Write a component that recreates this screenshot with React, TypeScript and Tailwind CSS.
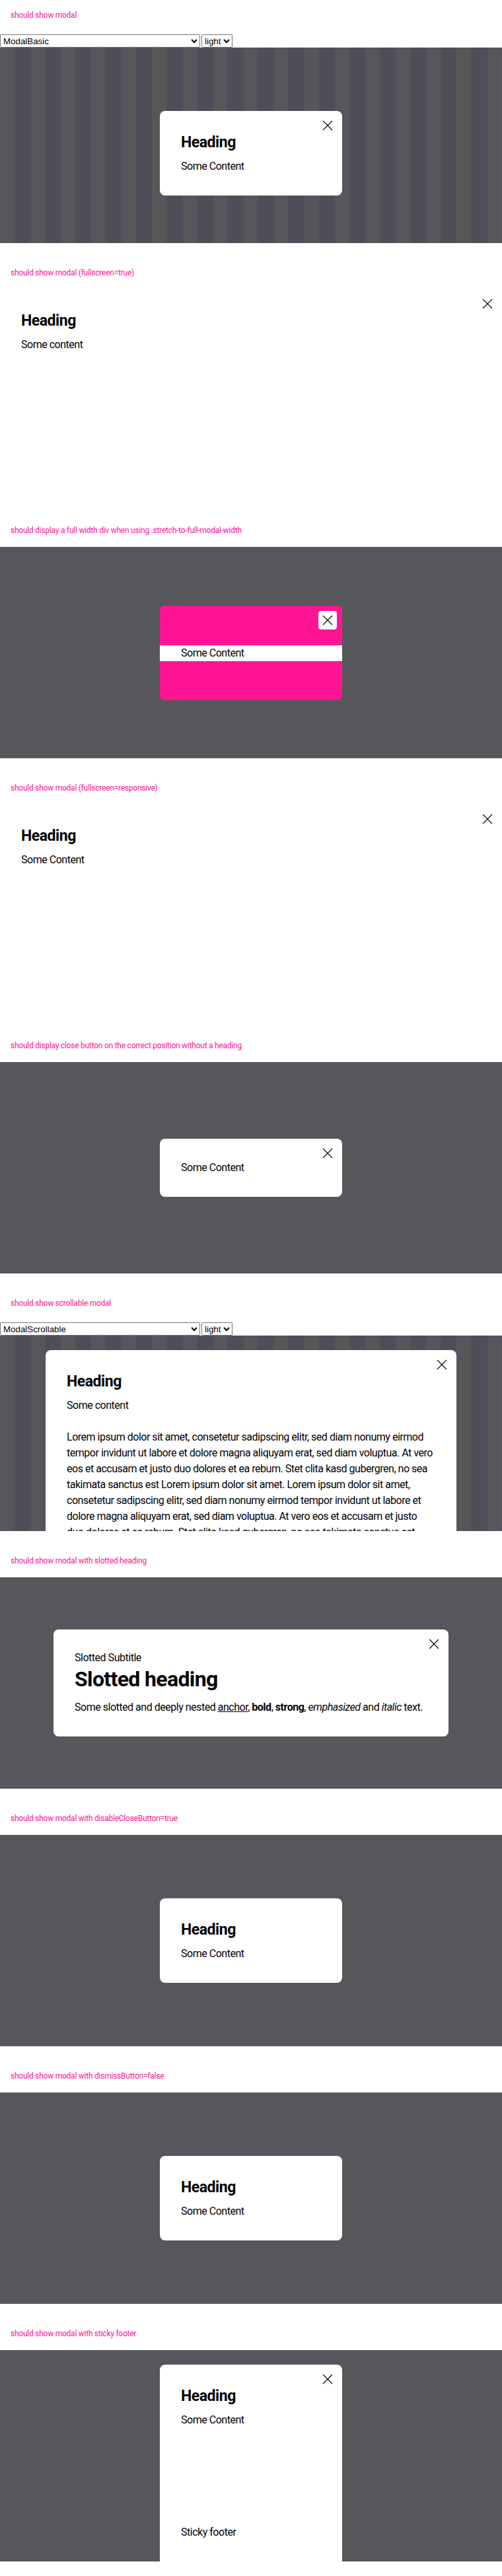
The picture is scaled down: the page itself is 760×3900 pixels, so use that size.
import type { ReactNode } from "react";

const lorem =
  "Lorem ipsum dolor sit amet, consetetur sadipscing elitr, sed diam nonumy eirmod tempor invidunt ut labore et dolore magna aliquyam erat, sed diam voluptua. At vero eos et accusam et justo duo dolores et ea rebum. Stet clita kasd gubergren, no sea takimata sanctus est Lorem ipsum dolor sit amet. Lorem ipsum dolor sit amet, consetetur sadipscing elitr, sed diam nonumy eirmod tempor invidunt ut labore et dolore magna aliquyam erat, sed diam voluptua. At vero eos et accusam et justo duo dolores et ea rebum. Stet clita kasd gubergren, no sea takimata sanctus est Lorem ipsum dolor sit amet.";

const stripes =
  "bg-[repeating-linear-gradient(90deg,#56575a_0px,#56575a_21.5px,#4e4e58_21.5px,#4e4e58_46.1px)]";

function CloseButton() {
  return (
    <button
      type="button"
      className="absolute right-2 top-2 flex size-7 items-center justify-center rounded-[4px] bg-white"
    >
      <svg width="28" height="28" viewBox="0 0 28 28" fill="none">
        <path d="M7 7L21 21M21 7L7 21" stroke="#010205" strokeWidth="1.1" />
      </svg>
    </button>
  );
}

function Heading(props: { children: ReactNode }) {
  return (
    <h2 className="text-[23px] font-bold leading-[32px] tracking-[-0.02em] text-[#010205]">
      {props.children}
    </h2>
  );
}

function Text(props: { children: ReactNode; className?: string }) {
  return (
    <p className={"text-[16px] leading-6 tracking-[-0.03em] text-[#010205] " + (props.className ?? "")}>
      {props.children}
    </p>
  );
}

function BasicModal(props: { close?: boolean; text?: string }) {
  return (
    <div className="relative w-[276px] rounded-lg bg-white p-8">
      {props.close !== false ? <CloseButton /> : null}
      <Heading>Heading</Heading>
      <Text className="mt-2">{props.text ?? "Some Content"}</Text>
    </div>
  );
}

function Section(props: { title: string; children: ReactNode }) {
  return (
    <section className="h-[390px] bg-white">
      <div className="h-[48px] pl-4 pt-[15px]">
        <p className="text-[12px] leading-4 tracking-[-0.02em] text-[#ff1493]">{props.title}</p>
      </div>
      <div className="h-[320px] overflow-hidden">{props.children}</div>
    </section>
  );
}

function Selects(props: { story: string }) {
  return (
    <div className="flex h-[24px] gap-[2px] pt-[4px] font-['Liberation_Sans',Arial,sans-serif] text-[13.33px] text-black">
      <select className="h-[20px] w-[303px] rounded-[2px] border border-[#767676] bg-white">
        <option>{props.story}</option>
      </select>
      <select className="h-[20px] w-[47px] rounded-[2px] border border-[#767676] bg-white">
        <option>light</option>
      </select>
    </div>
  );
}

function Backdrop(props: { children: ReactNode }) {
  return (
    <div className="flex h-full items-center justify-center bg-[#56575a]">{props.children}</div>
  );
}

export default function App() {
  return (
    <div className="w-[760px] font-['Roboto',sans-serif]">
      <Section title="should show modal">
        <Selects story="ModalBasic" />
        <div className={"h-[296px] overflow-hidden " + stripes}>
          <div className="flex h-[320px] items-center justify-center">
            <BasicModal />
          </div>
        </div>
      </Section>

      <Section title="should show modal (fullscreen=true)">
        <div className="relative h-full bg-white p-8">
          <CloseButton />
          <Heading>Heading</Heading>
          <Text className="mt-2">Some content</Text>
        </div>
      </Section>

      <Section title="should display a full width div when using .stretch-to-full-modal-width">
        <Backdrop>
          <div className="relative w-[276px] rounded-lg bg-[#ff1493] pb-[59px] pt-[60px]">
            <CloseButton />
            <Text className="bg-white px-8">Some Content</Text>
          </div>
        </Backdrop>
      </Section>

      <Section title="should show modal (fullscreen=responsive)">
        <div className="relative h-full bg-white p-8">
          <CloseButton />
          <Heading>Heading</Heading>
          <Text className="mt-2">Some Content</Text>
        </div>
      </Section>

      <Section title="should display close button on the correct position without a heading">
        <Backdrop>
          <div className="relative w-[276px] rounded-lg bg-white p-8">
            <CloseButton />
            <Text>Some Content</Text>
          </div>
        </Backdrop>
      </Section>

      <Section title="should show scrollable modal">
        <Selects story="ModalScrollable" />
        <div className={"h-[296px] overflow-hidden pt-[22px] " + stripes}>
          <div className="relative mx-auto w-[622px] rounded-lg bg-white p-8">
            <CloseButton />
            <Heading>Heading</Heading>
            <Text className="mt-2">Some content</Text>
            <Text className="mt-6">{lorem}</Text>
          </div>
        </div>
      </Section>

      <Section title="should show modal with slotted heading">
        <Backdrop>
          <div className="relative w-[598px] rounded-lg bg-white p-8 text-[#010205]">
            <CloseButton />
            <p className="text-[16px] leading-[22px] tracking-[-0.03em]">Slotted Subtitle</p>
            <h2 className="text-[32px] font-bold leading-[42px] tracking-[-0.02em]">Slotted heading</h2>
            <Text className="mt-[10px]">
              Some slotted and deeply nested{" "}
              <a href="#" className="underline">
                anchor
              </a>
              , <b>bold</b>, <strong>strong</strong>, <em className="italic">emphasized</em> and{" "}
              <i className="italic">italic</i> text.
            </Text>
          </div>
        </Backdrop>
      </Section>

      <Section title="should show modal with disableCloseButton=true">
        <Backdrop>
          <BasicModal close={false} />
        </Backdrop>
      </Section>

      <Section title="should show modal with dismissButton=false">
        <Backdrop>
          <BasicModal close={false} />
        </Backdrop>
      </Section>

      <Section title="should show modal with sticky footer">
        <div className="h-full bg-[#56575a] pt-[22px]">
          <div className="relative mx-auto flex h-[298px] w-[276px] flex-col justify-between rounded-t-lg bg-white p-8">
            <CloseButton />
            <div>
              <Heading>Heading</Heading>
              <Text className="mt-2">Some Content</Text>
            </div>
            <Text>Sticky footer</Text>
          </div>
        </div>
      </Section>
    </div>
  );
}
